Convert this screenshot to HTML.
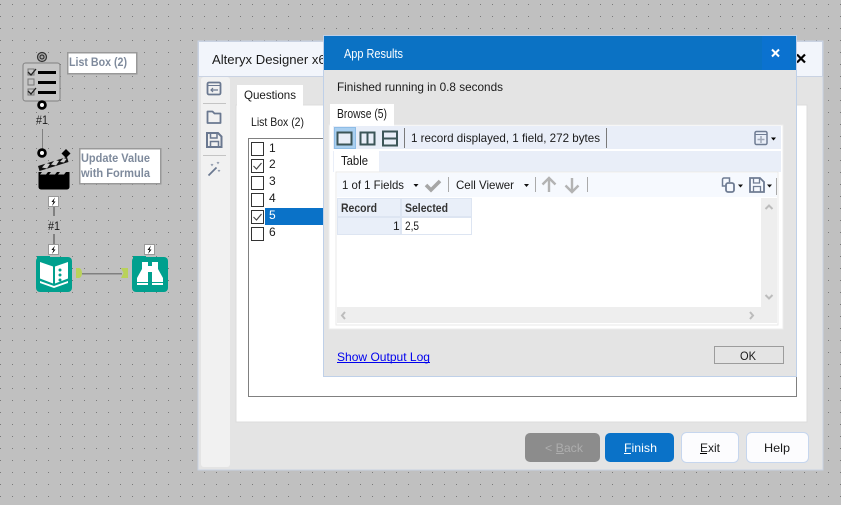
<!DOCTYPE html>
<html><head><meta charset="utf-8"><title>App Results</title>
<style>
html,body{margin:0;padding:0;width:841px;height:505px;overflow:hidden;background:#c0c0c0}
svg{display:block;font-family:"Liberation Sans",sans-serif;font-size:12px;fill:#1a1a1a}
rect.c,line{shape-rendering:crispEdges}
.b{font-weight:bold;fill:#7e8a9c}
</style></head><body>
<svg width="841" height="505" viewBox="0 0 841 505" xmlns="http://www.w3.org/2000/svg">
<defs><pattern id="dots" x="0" y="4" width="12" height="12" patternUnits="userSpaceOnUse"><rect x="0" y="0" width="1" height="1" fill="#7a7a7a"/></pattern></defs>
<rect class="c" width="841" height="505" fill="#c0c0c0"/>
<rect class="c" width="841" height="505" fill="url(#dots)"/>

<!-- canvas: list box tool -->
<line x1="42.5" y1="129" x2="42.5" y2="150" stroke="#808080"/>
<circle cx="42" cy="57" r="4.5" fill="#a8a8a8" stroke="#333" stroke-width="1.2"/><circle cx="42" cy="57" r="2" fill="none" stroke="#222"/>
<rect x="23" y="63" width="37" height="38" rx="2.5" fill="#c6c6c6" stroke="#808080"/>
<rect class="c" x="28" y="69" width="6" height="6" fill="#c6c6c6" stroke="#777"/><rect class="c" x="28" y="79" width="6" height="6" fill="#c6c6c6" stroke="#777"/><rect class="c" x="28" y="89" width="6" height="6" fill="#c6c6c6" stroke="#777"/>
<path d="M28 72l3 3 5-6M28 91l3 3 5-6" fill="none" stroke="#222" stroke-width="1.3"/>
<rect class="c" x="38" y="71" width="18" height="3" fill="#000"/><rect class="c" x="38" y="81" width="18" height="3" fill="#000"/><rect class="c" x="38" y="91" width="18" height="3" fill="#000"/>
<circle cx="42" cy="105" r="4.8" fill="#000"/><circle cx="42" cy="105" r="2" fill="#fff"/>
<text x="36" y="124" textLength="12" lengthAdjust="spacingAndGlyphs">#1</text>
<rect class="c" x="67.5" y="52.5" width="69" height="21" fill="#fff" stroke="#999" stroke-width="1.5"/>
<text class="b" x="69" y="66" font-size="12" textLength="58" lengthAdjust="spacingAndGlyphs">List Box (2)</text>

<!-- formula tool -->
<circle cx="42" cy="153" r="4.8" fill="#000"/><circle cx="42" cy="153" r="2" fill="#fff"/>
<path d="M66 149l4.5 4.5-4.5 4.5-4.5-4.5z" fill="#000"/>
<path d="M38 166l29-9 1.500 5-29 9z" fill="#111"/><path d="M42 167.500l4-4.500 4 1-3 4.500zM51 164.500l4-4.500 4 1-3 4.500zM60 162l3.500-4 3 1-2.500 3.500z" fill="#ccc"/>
<path d="M38.500 172h31v15a2.500 2.500 0 0 1-2.500 2.500h-26a2.500 2.500 0 0 1-2.500-2.500z" fill="#000"/>
<path d="M42 172h6l-2 2.500h-6zM51 172h6l-2 2.500h-6zM60 172h6l-2 2.500h-6z" fill="#bbb"/>
<rect class="c" x="79.500" y="148.500" width="81" height="35" fill="#fff" stroke="#999" stroke-width="1.5"/>
<text class="b" x="81" y="162" font-size="12" textLength="69" lengthAdjust="spacingAndGlyphs">Update Value</text>
<text class="b" x="81" y="177" font-size="12" textLength="69" lengthAdjust="spacingAndGlyphs">with Formula</text>
<line x1="54" y1="206" x2="54" y2="216" stroke="#808080" stroke-width="2"/><line x1="54" y1="234" x2="54" y2="245" stroke="#808080" stroke-width="2"/>
<text x="48" y="230" textLength="12" lengthAdjust="spacingAndGlyphs">#1</text>
<rect class="c" x="48.500" y="196.500" width="10" height="10" fill="#fff" stroke="#999"/><path d="M55 197.500l-3.500 4.500h2l-1.500 4 3.500-4.500h-2z" fill="#000"/>
<rect class="c" x="48.500" y="244.500" width="10" height="10" fill="#fff" stroke="#999"/><path d="M55 245.500l-3.500 4.500h2l-1.500 4 3.500-4.500h-2z" fill="#000"/>
<rect class="c" x="144.500" y="244.500" width="10" height="10" fill="#fff" stroke="#999"/><path d="M151 245.500l-3.500 4.500h2l-1.500 4 3.500-4.500h-2z" fill="#000"/>

<!-- book -->
<rect x="36" y="257" width="36" height="35" rx="4" fill="#00a08e"/><rect x="37" y="256" width="13" height="4" fill="#00a08e"/>
<path d="M40 262l13 4.500v17l-13-5z" fill="#fff"/><path d="M55 266.500l13-4.500v16.500l-13 5z" fill="#fff"/>
<path d="M40 281l14 5 14-5v2l-14 5-14-5z" fill="#fff"/>
<circle cx="60" cy="270" r="1.500" fill="#00a08e"/><circle cx="60" cy="275" r="1.500" fill="#00a08e"/><circle cx="60" cy="280" r="1.500" fill="#00a08e"/>
<!-- connector -->
<line x1="82" y1="273.500" x2="122" y2="273.500" stroke="#808080" stroke-width="1.500"/>
<path d="M76 268h3a3 5 0 0 1 3 5 3 5 0 0 1-3 5h-3z" fill="#b9d25a"/>
<path d="M121 268h7v10h-7l2.500-5z" fill="#b9d25a"/>
<!-- binoculars -->
<rect x="132" y="257" width="36" height="35" rx="4" fill="#00a08e"/><rect x="133" y="256" width="13" height="4" fill="#00a08e"/>
<path d="M142 262h6v23h-11v-7l5-9zM158 262h-6v23h11v-7l-5-9z" fill="#fff"/>
<rect class="c" x="148" y="266" width="4" height="6" fill="#fff"/>
<rect class="c" x="137" y="282" width="26" height="1" fill="#00a08e"/>

<!-- main window -->
<rect class="c" x="198" y="41" width="625" height="429" fill="#e4e4e4" stroke="#c9d2e2"/>
<rect class="c" x="198.500" y="41.500" width="624" height="35" fill="#f2f5fb" stroke="#c9d2e2"/>
<text x="212" y="64" font-size="13" textLength="121" lengthAdjust="spacingAndGlyphs">Alteryx Designer x64</text>
<path d="M797 54.500l8 8M805 54.500l-8 8" stroke="#000" stroke-width="2.200" fill="none"/>
<rect x="201" y="77" width="29" height="390" rx="3" fill="#f1f1f1"/>
<!-- toolbar icons -->
<rect x="207.500" y="82.500" width="13" height="12" rx="1.500" fill="none" stroke="#6a7890" stroke-width="1.800"/><line x1="208" y1="85.500" x2="220" y2="85.500" stroke="#6a7890"/><path d="M218 90h-7M213 88l-2 2 2 2" fill="none" stroke="#6a7890" stroke-width="1.200"/>
<line x1="203" y1="103.500" x2="226" y2="103.500" stroke="#c4c4c4"/>
<path d="M207.500 111.500h5l2 2h6v9.500h-13z" fill="none" stroke="#6a7890" stroke-width="1.800" stroke-linejoin="round"/>
<path d="M207 133h11l3.500 3.500v10.500h-14.500z" fill="none" stroke="#6a7890" stroke-width="2"/><path d="M210.500 134v4h6.500v-4M210.500 147v-5.500h8v5.500" fill="none" stroke="#6a7890" stroke-width="1.500"/>
<line x1="203" y1="155.500" x2="226" y2="155.500" stroke="#c4c4c4"/>
<path d="M208.500 175.500l8-8" stroke="#6a7890" stroke-width="1.800"/><path d="M211 164l1 1.500 1-1.500M217 162l1 1.500 1-1.500M218 170l1 1.300 1-1.300" stroke="#8a95a8" fill="none"/>

<!-- content panel -->
<rect class="c" x="236" y="105" width="571" height="317" fill="#fff" stroke="#dcdcdc"/>
<rect class="c" x="237" y="85" width="66" height="21" fill="#fff"/>
<text x="244" y="99" textLength="52" lengthAdjust="spacingAndGlyphs">Questions</text>
<text x="251" y="126" textLength="53" lengthAdjust="spacingAndGlyphs">List Box (2)</text>
<rect class="c" x="248.500" y="138.500" width="548" height="258" fill="#fff" stroke="#808080"/>
<rect class="c" x="265" y="208" width="60" height="17" fill="#0a72c8"/>
<g fill="#fff" stroke="#333">
<rect class="c" x="251.500" y="142.500" width="12" height="13"/><rect class="c" x="251.500" y="159.500" width="12" height="13"/><rect class="c" x="251.500" y="176.500" width="12" height="13"/><rect class="c" x="251.500" y="193.500" width="12" height="13"/><rect class="c" x="251.500" y="210.500" width="12" height="13"/><rect class="c" x="251.500" y="227.500" width="12" height="13"/>
</g>
<path d="M253.500 166l3 3 5-6M253.500 217l3 3 5-6" fill="none" stroke="#444" stroke-width="1.100"/>
<text x="269" y="152">1</text><text x="269" y="168">2</text><text x="269" y="185">3</text><text x="269" y="202">4</text><text x="269" y="219" fill="#fff">5</text><text x="269" y="236">6</text>

<!-- bottom buttons -->
<rect x="525" y="433" width="75" height="29" rx="5" fill="#8c8c8c"/>
<text x="545" y="452" fill="#adadad" textLength="38" lengthAdjust="spacingAndGlyphs">&lt; Back</text><rect class="c" x="556" y="453" width="8" height="1" fill="#adadad"/>
<rect x="605" y="433" width="69" height="29" rx="5" fill="#0a72c8"/>
<text x="624" y="452" fill="#fff" textLength="33" lengthAdjust="spacingAndGlyphs">Finish</text><rect class="c" x="624" y="453" width="7" height="1" fill="#fff"/>
<rect x="681.500" y="432.500" width="57" height="30" rx="5" fill="#fcfcfe" stroke="#c6d6ee"/>
<text x="700" y="452" textLength="20" lengthAdjust="spacingAndGlyphs">Exit</text><rect class="c" x="700" y="453" width="7" height="1" fill="#000"/>
<rect x="746.500" y="432.500" width="62" height="30" rx="5" fill="#fcfcfe" stroke="#c6d6ee"/>
<text x="764" y="452" textLength="26" lengthAdjust="spacingAndGlyphs">Help</text>

<!-- dialog -->
<rect class="c" x="323.500" y="35.500" width="473" height="341" fill="#e4e4e4" stroke="#bfd0e8"/>
<rect class="c" x="324" y="36" width="472" height="34" fill="#0b72c4"/>
<rect class="c" x="762" y="36" width="28" height="34" fill="#0b72d0"/>
<path d="M772 49.500l7 7M779 49.500l-7 7" stroke="#fff" stroke-width="2" fill="none"/>
<text x="344" y="58" fill="#fff" font-size="12.500" textLength="59" lengthAdjust="spacingAndGlyphs">App Results</text>
<text x="337" y="91" textLength="166" lengthAdjust="spacingAndGlyphs">Finished running in 0.8 seconds</text>
<rect class="c" x="329" y="125" width="454" height="204" fill="#fff" stroke="#ededed"/>
<rect class="c" x="330" y="104" width="64" height="22" fill="#fff"/>
<text x="337" y="118" font-size="12.500" textLength="50" lengthAdjust="spacingAndGlyphs">Browse (5)</text>
<rect class="c" x="333" y="126" width="448" height="23" fill="#e9eef8"/>
<rect class="c" x="334.500" y="127.500" width="21" height="21" fill="#a9cff0" stroke="#8fbde6"/>
<rect class="c" x="337.500" y="132.500" width="14" height="12" fill="#e9eef8" stroke="#3c5558" stroke-width="2"/>
<rect class="c" x="360.500" y="132.500" width="14" height="12" fill="none" stroke="#3c5558" stroke-width="2"/><line x1="367.500" y1="132" x2="367.500" y2="145" stroke="#3c5558" stroke-width="2"/>
<rect class="c" x="383" y="131.500" width="14" height="14" fill="none" stroke="#3c5558" stroke-width="2"/><line x1="382" y1="138.500" x2="398" y2="138.500" stroke="#3c5558" stroke-width="2"/>
<line x1="404.500" y1="128" x2="404.500" y2="148" stroke="#7a7a7a"/>
<text x="411" y="142" textLength="189" lengthAdjust="spacingAndGlyphs">1 record displayed, 1 field, 272 bytes</text>
<line x1="606.500" y1="128" x2="606.500" y2="148" stroke="#7a7a7a"/>
<rect x="755" y="131.500" width="12" height="13" rx="1.500" fill="none" stroke="#6f7c93" stroke-width="1.500"/><line x1="755" y1="134.500" x2="767" y2="134.500" stroke="#6f7c93"/><path d="M761 136v7M757.500 139.500h7" stroke="#a0a8b8" stroke-width="1.500"/>
<path d="M771 137.500h5l-2.500 3z" fill="#000"/>
<rect class="c" x="333" y="151" width="448" height="21" fill="#e9eef8"/>
<rect class="c" x="334" y="151" width="45" height="22" fill="#fff"/>
<text x="341" y="165" font-size="12.500" textLength="27" lengthAdjust="spacingAndGlyphs">Table</text>
<rect class="c" x="336" y="172" width="442" height="153" fill="#fff" stroke="#e9e9e9"/>
<rect class="c" x="337" y="173" width="440" height="24" fill="#f6f9fe"/>
<text x="342" y="189" textLength="62" lengthAdjust="spacingAndGlyphs">1 of 1 Fields</text>
<path d="M413.500 184h5l-2.500 3z" fill="#111"/>
<path d="M426 185l5 5 9-9" fill="none" stroke="#a6a6a6" stroke-width="3.600"/>
<line x1="448.500" y1="177" x2="448.500" y2="192" stroke="#aaa"/>
<text x="456" y="189" textLength="58" lengthAdjust="spacingAndGlyphs">Cell Viewer</text>
<path d="M524 184h5l-2.500 3z" fill="#111"/>
<line x1="535.500" y1="177" x2="535.500" y2="192" stroke="#aaa"/>
<path d="M549 192v-14M542.500 184.500l6.500-6.500 6.500 6.500" fill="none" stroke="#b3b3b3" stroke-width="2.400"/>
<path d="M572 178v14M565.500 185.500l6.500 6.500 6.500-6.500" fill="none" stroke="#b3b3b3" stroke-width="2.400"/>
<line x1="587.500" y1="177" x2="587.500" y2="192" stroke="#aaa"/>
<rect x="726" y="183" width="8" height="9" rx="2" fill="none" stroke="#6f7c93" stroke-width="1.800"/><path d="M726 186h-3.500v-6.500a1.500 1.500 0 0 1 1.500-1.500h5.500v4" fill="none" stroke="#6f7c93" stroke-width="1.500"/>
<path d="M738 184.500h5l-2.500 3z" fill="#111"/>
<path d="M750 178h10l4 4v10h-14z" fill="none" stroke="#6f7c93" stroke-width="1.800"/><path d="M753.500 178.500v4.500h6v-4.500M753.500 192v-5.500h7v5.500" fill="none" stroke="#6f7c93" stroke-width="1.300"/>
<path d="M767 184.500h5l-2.500 3z" fill="#111"/>
<line x1="776.500" y1="178" x2="776.500" y2="195" stroke="#aaa"/>

<!-- table -->
<rect class="c" x="337" y="198" width="135" height="37" fill="#dde5f2"/>
<rect class="c" x="338" y="199" width="62" height="17" fill="#e9eff9"/>
<rect class="c" x="402" y="199" width="69" height="17" fill="#e9eff9"/>
<rect class="c" x="338" y="218" width="62" height="16" fill="#e9eff9"/>
<rect class="c" x="402" y="218" width="69" height="16" fill="#fff"/>
<text x="341" y="212" font-weight="bold" fill="#333" textLength="36" lengthAdjust="spacingAndGlyphs">Record</text>
<text x="405" y="212" font-weight="bold" fill="#333" textLength="43" lengthAdjust="spacingAndGlyphs">Selected</text>
<text x="393" y="230">1</text>
<text x="405" y="230" textLength="14" lengthAdjust="spacingAndGlyphs">2,5</text>
<!-- scrollbars -->
<rect class="c" x="761" y="198" width="16" height="125" fill="#eeeeee"/>
<rect class="c" x="337" y="307" width="440" height="16" fill="#eeeeee"/>
<path d="M765.500 209l3.500-3.500 3.500 3.500M765.500 295l3.500 3.500 3.500-3.500M345 312l-3 3.500 3 3.500M750 312l3 3.500-3 3.500" fill="none" stroke="#bcbcbc" stroke-width="2"/>

<text x="337" y="361" fill="#0000ee" textLength="93" lengthAdjust="spacingAndGlyphs">Show Output Log</text>
<rect class="c" x="337" y="362" width="93" height="1" fill="#0000ee"/>
<rect class="c" x="714.500" y="346.500" width="69" height="17" fill="#e4e4e4" stroke="#9c9c9c"/>
<text x="740" y="360" textLength="16" lengthAdjust="spacingAndGlyphs">OK</text>
</svg>
</body></html>
